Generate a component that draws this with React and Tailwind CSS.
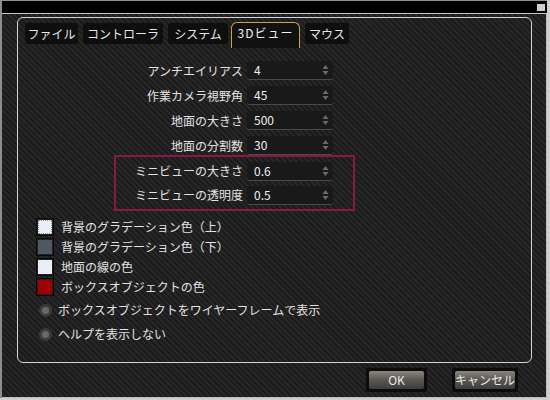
import React from 'react';

const stripes =
  'bg-[repeating-linear-gradient(45deg,#1b1b1b_0px,#1b1b1b_2px,#272727_2px,#272727_4px)]';

const tabs = [
  { label: 'ファイル', w: 'w-[53px]' },
  { label: 'コントローラ', w: 'w-[80px]' },
  { label: 'システム', w: 'w-[60px]' },
  { label: '3Dビュー', w: 'w-[69px]', active: true },
  { label: 'マウス', w: 'w-[44px]' },
];

const Spinner = () => (
  <svg width="7" height="12" viewBox="0 0 7 12" className="shrink-0">
    <path d="M3.5 1 L6.5 5 L0.5 5 Z" fill="#6a6a6a" />
    <path d="M3.5 11 L6.5 7 L0.5 7 Z" fill="#6a6a6a" />
  </svg>
);

const NumberRow = ({ label, value, h = 'h-[25px]' }) => (
  <div className={`flex items-center ${h}`}>
    <div className="w-[131px] text-right pr-[4px] text-[#e2e2e2]">{label}</div>
    <div className="w-[86px] h-[19px] flex items-center justify-between pl-[7px] pr-[4px] rounded-[3px] bg-[#191919] border-b border-[#4a4a4a] text-[#f0f0f0]">
      <span>{value}</span>
      <Spinner />
    </div>
  </div>
);

const ColorRow = ({ color, label, focus }) => (
  <div className="flex items-center h-[20px]">
    <div className="w-[18px] h-[18px] border border-[#0a0a0a] p-[1px]">
      <div
        className={`w-full h-full ${color} ${focus ? 'border border-dotted border-[#8a8f99]' : ''}`}
      />
    </div>
    <span className="ml-[7px] text-[#e2e2e2]">{label}</span>
  </div>
);

const Radio = ({ label }) => (
  <div className="flex items-center h-[24px]">
    <div className="w-[13px] h-[13px] rounded-full bg-[#3c3c3a] flex items-center justify-center">
      <div className="w-[7px] h-[7px] rounded-full bg-[#6a6864]" />
    </div>
    <span className="ml-[6px] text-[#e2e2e2]">{label}</span>
  </div>
);

const Button = ({ children, w }) => (
  <div className={`${w} h-[24px] bg-[#0c0c0c] p-[3px] rounded-[2px]`}>
    <div className="h-full flex items-center justify-center rounded-[2px] bg-[linear-gradient(#8a8680,#5a5752_50%,#3e3c39)] text-[#e8e8e8]">
      {children}
    </div>
  </div>
);

export default function App() {
  return (
    <div
      className="w-[550px] h-[400px] flex bg-[#cfcfcf] text-[12px] leading-none"
      style={{ fontFamily: '"Noto Sans CJK JP", "Noto Sans", sans-serif' }}
    >
      <div className="w-[547px] h-[398px] flex flex-col border-l-2 border-t border-[#8d8d8d] bg-black">
        {/* title bar */}
        <div className="h-[13px] flex justify-end items-start pt-[3px] pr-[2px] border-b border-[#c8c8c8]">
          <div className="w-[8px] h-[7px] bg-[#cfcfcf]" />
        </div>
        {/* body */}
        <div className={`flex-1 flex flex-col ${stripes} border-r border-b border-[#bdbdbd] pl-[15px] pr-[14px] pt-[3px]`}>
          <div className="h-[346px] rounded-[6px] border border-[#d4d4d4] pl-[4px] pr-[4px] pt-[4px] flex flex-col">
            {/* tabs */}
            <div className="flex items-start gap-[5px] h-[26px] ml-[3px]">
              {tabs.map((t) =>
                t.active ? (
                  <div
                    key={t.label}
                    className={`${t.w} -ml-[2px] h-[26px] pt-[4px] flex items-start justify-center rounded-t-[6px] border border-b-0 border-[#c9a24a] bg-[#111] text-[#f0f0f0] tracking-[1px]`}
                  >
                    {t.label}
                  </div>
                ) : (
                  <div
                    key={t.label}
                    className={`${t.w} h-[21px] mt-[1px] flex items-center justify-center rounded-[3px] bg-[#0e0e0e] text-[#e6e6e6]`}
                  >
                    {t.label}
                  </div>
                )
              )}
            </div>
            {/* number fields */}
            <div className="ml-[94px] mt-[10px] flex flex-col">
              <NumberRow label="アンチエイリアス" value="4" />
              <NumberRow label="作業カメラ視野角" value="45" />
              <NumberRow label="地面の大きさ" value="500" />
              <NumberRow label="地面の分割数" value="30" />
              <div className="w-[241px] -mt-[3px] border-2 border-[#8a1840] pt-[2px] pb-[2px] -ml-[2px]">
                <NumberRow label="ミニビューの大きさ" value="0.6" h="h-[24px]" />
                <NumberRow label="ミニビューの透明度" value="0.5" h="h-[24px]" />
              </div>
            </div>
            {/* colors */}
            <div className="ml-[14px] mt-[6px] flex flex-col">
              <ColorRow color="bg-[#eaeef6]" label="背景のグラデーション色（上）" focus />
              <ColorRow color="bg-[#4f5760]" label="背景のグラデーション色（下）" />
              <ColorRow color="bg-[#e9edf5]" label="地面の線の色" />
              <ColorRow color="bg-[#a00000]" label="ボックスオブジェクトの色" />
            </div>
            {/* radios */}
            <div className="ml-[17px] mt-[1px] flex flex-col">
              <Radio label="ボックスオブジェクトをワイヤーフレームで表示" />
              <Radio label="ヘルプを表示しない" />
            </div>
          </div>
          {/* buttons */}
          <div className="flex justify-end gap-[25px] mt-[5px] pr-[14px]">
            <Button w="w-[61px]">OK</Button>
            <Button w="w-[66px]">キャンセル</Button>
          </div>
        </div>
      </div>
    </div>
  );
}
